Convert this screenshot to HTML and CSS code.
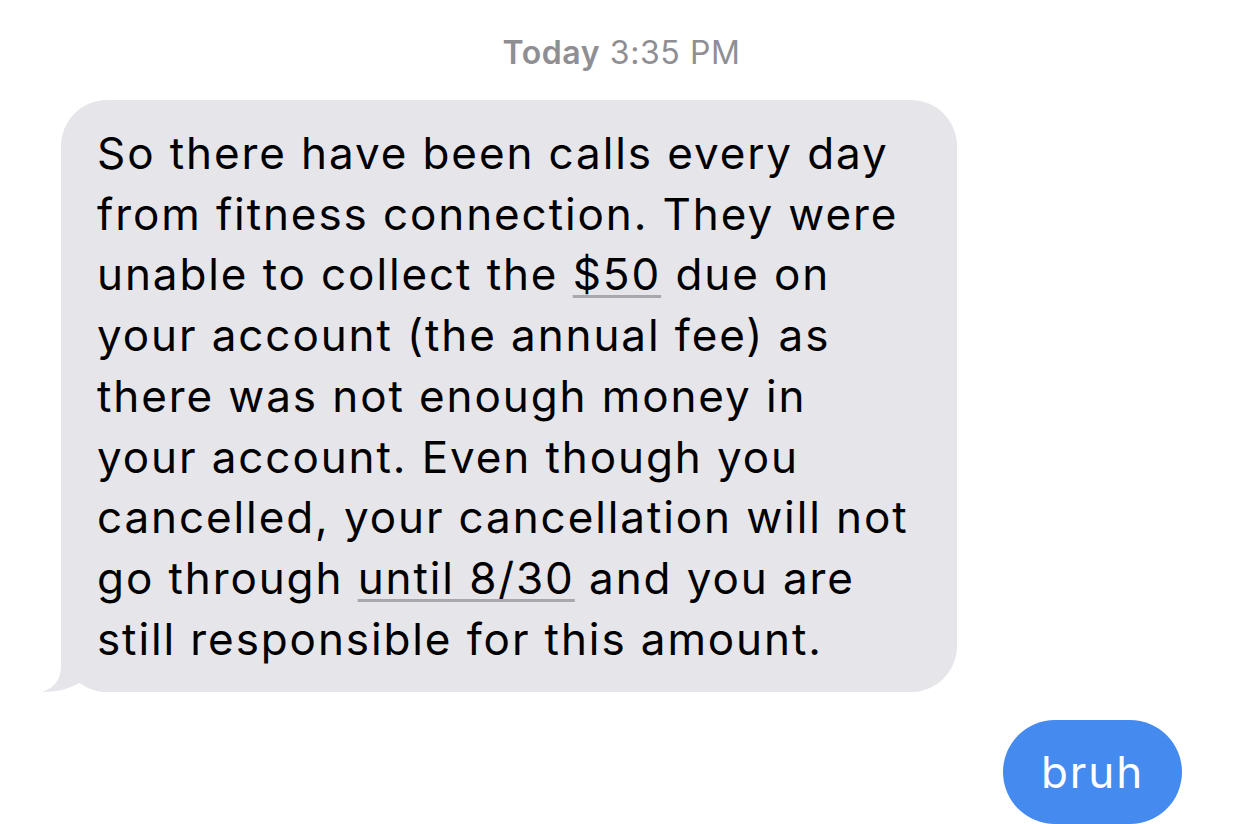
FILE: index.html
```html
<!DOCTYPE html>
<html lang="en">
<head>
    <meta charset="UTF-8">
    <title>Messages</title>
    <link rel="stylesheet" href="styles.css">
</head>
<body>
    <div class="thread">
        <p class="stamp"><strong>Today</strong> 3:35 PM</p>

        <div class="row">
            <div class="bubble received">
                <svg class="tail" width="70" height="60" viewBox="0 0 70 60">
                    <path d="M22 0 L22 34 C22 48 15 56 3 60 C18 60 30 57 42 50 C50 56 58 60 70 60 L70 0 Z" fill="#e5e5ea"/>
                </svg>
                <p class="text">
                    So there have been calls every day<br>
                    from fitness connection. They were<br>
                    unable to collect the <span class="link">$50</span> due on<br>
                    your account (the annual fee) as<br>
                    there was not enough money in<br>
                    your account. Even though you<br>
                    cancelled, your cancellation will not<br>
                    go through <span class="link">until 8/30</span> and you are<br>
                    still responsible for this amount.
                </p>
            </div>
        </div>

        <div class="row mine">
            <div class="bubble sent">bruh</div>
        </div>
    </div>
</body>
</html>
```

FILE: styles.css
```css
body {
    margin: 0;
    background: #ffffff;
    font-family: Inter, "Liberation Sans", Arial, sans-serif;
    color: #000000;
}

.thread {
    display: flex;
    flex-direction: column;
    padding: 0 59px 0 61px;
    height: 824px;
    overflow: hidden;
}

.stamp {
    margin: 33px 0 0;
    text-align: center;
    font-size: 32px;
    line-height: 40px;
    letter-spacing: 0.6px;
    color: #8e8e93;
}

.stamp strong {
    font-weight: 600;
}

.row {
    display: flex;
}

.row.mine {
    justify-content: flex-end;
    margin-top: 28px;
}

.bubble {
    position: relative;
    font-size: 44px;
    line-height: 60.7px;
    letter-spacing: 1.9px;
}

.received {
    margin-top: 27px;
    width: 896px;
    box-sizing: border-box;
    padding: 23px 36px;
    background: #e5e5ea;
    border-radius: 46px;
}

.text {
    position: relative;
    margin: 0;
}

/* tail sits over the bottom-left corner */
.tail {
    position: absolute;
    left: -22px;
    bottom: 0;
    display: block;
}

.link {
    text-decoration: underline;
    text-decoration-color: #a7a7ac;
    text-decoration-thickness: 3px;
    text-underline-offset: 5px;
}

.sent {
    width: 179px;
    height: 104px;
    box-sizing: border-box;
    display: flex;
    align-items: center;
    justify-content: center;
    background: #448aef;
    color: #ffffff;
    border-radius: 52px;
}
```
